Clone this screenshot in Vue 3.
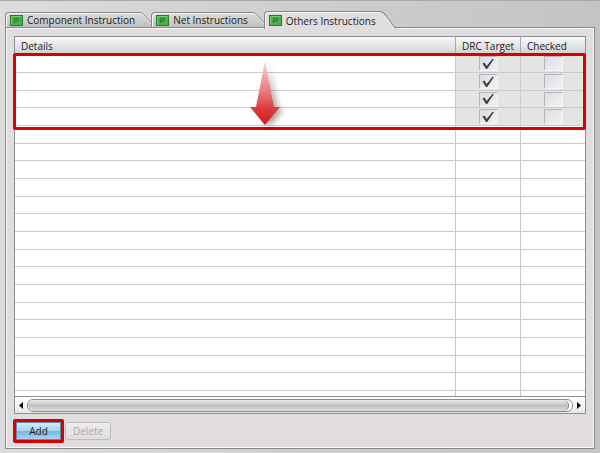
<template>
  <main class="window">
    <nav class="tabs" role="tablist">
      <button
        v-for="tab in tabs"
        :key="tab"
        type="button"
        role="tab"
        class="tab"
        :class="{ 'tab--active': tab === activeTab }"
        :aria-selected="tab === activeTab"
        @click="activeTab = tab"
      >
        <span class="tab-body">
          <svg class="tab-icon" width="13" height="11" viewBox="0 0 13 11">
            <rect x="0.5" y="0.5" width="12" height="10" fill="#4dae4b" stroke="#227e2b" />
            <path d="M1.5 9.5V1.5H11.5" fill="none" stroke="#72c96c" />
            <path d="M4.5 8V3.5H8.5V5.5H6.5V6.5H4.5" fill="none" stroke="#277b2a" />
          </svg>
          {{ tab }}
        </span>
        <svg class="tab-end" width="16" height="17" viewBox="0 0 16 17" preserveAspectRatio="none">
          <defs>
            <linearGradient id="tab-fill" x1="0" y1="0" x2="0" y2="1">
              <stop offset="0" stop-color="#dcdcdc" />
              <stop offset="1" stop-color="#c0c0c0" />
            </linearGradient>
          </defs>
          <path class="tab-end-fill" d="M0 0C3 0 4 2 6 5L15 17H0Z" fill="url(#tab-fill)" />
          <path d="M0 1.5C3 1.5 4 3 6 6L14 16" fill="none" stroke="#f8f8f8" />
          <path d="M0 0.5C3 0.5 4 2 6 4.5L15.5 16.5" fill="none" stroke="#858589" />
        </svg>
      </button>
    </nav>

    <section class="panel">
      <div class="grid">
        <table class="table">
          <colgroup>
            <col />
            <col class="col-target" />
            <col class="col-checked" />
          </colgroup>
          <thead>
            <tr>
              <th>Details</th>
              <th>DRC Target</th>
              <th>Checked</th>
            </tr>
          </thead>
          <tbody>
            <tr v-for="(row, i) in rows" :key="i" :class="{ filled: row }">
              <td></td>
              <td>
                <label v-if="row" class="check">
                  <input v-model="row.target" type="checkbox" aria-label="DRC Target" />
                  <svg v-if="row.target" width="12" height="12" viewBox="0 0 12 12">
                    <path d="M0.5 5.5L2.5 4.5L4.7 8L10.5 0.8L11.8 1.2L5.2 11H4Z" fill="#3f3f42" />
                  </svg>
                </label>
              </td>
              <td>
                <label v-if="row" class="check">
                  <input v-model="row.checked" type="checkbox" aria-label="Checked" />
                </label>
              </td>
            </tr>
          </tbody>
        </table>

        <div class="scrollbar">
          <button type="button" class="scroll-arrow" aria-label="Scroll left">
            <svg width="4" height="7" viewBox="0 0 4 7"><path d="M4 0V7L0 3.5Z" /></svg>
          </button>
          <div class="scroll-track"><div class="scroll-thumb"></div></div>
          <button type="button" class="scroll-arrow" aria-label="Scroll right">
            <svg width="4" height="7" viewBox="0 0 4 7"><path d="M0 0V7L4 3.5Z" /></svg>
          </button>
        </div>

        <div class="highlight">
          <svg class="arrow" width="44" height="76" viewBox="0 0 44 76">
            <defs>
              <linearGradient id="arrow-fill" x1="0" y1="0" x2="0" y2="1">
                <stop offset="0" stop-color="#fbd5d5" />
                <stop offset="0.45" stop-color="#ec8080" />
                <stop offset="0.75" stop-color="#db3a3c" />
                <stop offset="1" stop-color="#d3191c" />
              </linearGradient>
              <filter id="arrow-blur" x="-50%" y="-20%" width="200%" height="140%">
                <feGaussianBlur stdDeviation="3" />
              </filter>
              <linearGradient id="arrow-shade" x1="0" y1="0" x2="0" y2="1">
                <stop offset="0" stop-color="#000" stop-opacity="0.1" />
                <stop offset="1" stop-color="#000" stop-opacity="0.45" />
              </linearGradient>
            </defs>
            <path
              d="M22 8L31 54H37L22 71L8 54H13Z"
              transform="translate(4 2)"
              fill="url(#arrow-shade)"
              filter="url(#arrow-blur)"
            />
            <path d="M22 8L31 54H37L22 72L7 54H13Z" fill="url(#arrow-fill)" />
          </svg>
        </div>
      </div>

      <div class="actions">
        <span class="add-mark">
          <button type="button" class="btn btn--add">Add</button>
        </span>
        <button type="button" class="btn" disabled>Delete</button>
      </div>
    </section>
  </main>
</template>

<script setup>
import { ref } from 'vue'

const tabs = ['Component Instruction', 'Net Instructions', 'Others Instructions']
const activeTab = ref('Others Instructions')

const TOTAL_ROWS = 20
const FILLED_ROWS = 4

const rows = ref(
  Array.from({ length: TOTAL_ROWS }, (_, i) =>
    i < FILLED_ROWS ? { target: true, checked: false } : null
  )
)
</script>

<style>
body {
  margin: 0;
  background: #c9c8c8;
}
</style>

<style scoped>
.window {
  box-sizing: border-box;
  min-height: 100vh;
  padding: 10px 5px 5px;
  border-top: 1px solid #a9a9a9;
  background: linear-gradient(90deg, #dedddd, #cfcfcf 45%, #c4c4c4);
  font-family: 'Open Sans', 'Noto Sans', sans-serif;
  font-size: 10px;
  line-height: 14px;
  color: #1c1c22;
}

button {
  font: inherit;
  color: inherit;
}

.tabs {
  display: flex;
  align-items: flex-end;
  height: 16px;
}

.tab {
  display: flex;
  height: 15px;
  margin: 0 -4px 0 0;
  padding: 0;
  border: 0;
  background: none;
}

.tab-body {
  box-sizing: border-box;
  display: flex;
  align-items: center;
  gap: 4px;
  height: 100%;
  padding: 0 5px 0 4px;
  border: 1px solid #858589;
  border-width: 1px 0 0 1px;
  border-radius: 4px 0 0 0;
  background: linear-gradient(#dcdcdc, #c0c0c0);
  box-shadow: inset 1px 1px 0 #f8f8f8;
  white-space: nowrap;
}

.tab-icon {
  flex: none;
}

.tab-end {
  height: 100%;
  margin-left: -1px;
}

.tab--active {
  position: relative;
  height: 18px;
  margin-bottom: -2px;
}

.tab--active .tab-body {
  background: #e1dddd;
}

.tab--active .tab-end-fill {
  fill: #e1dddd;
}

.panel {
  padding: 8px 8px 5px;
  border: 1px solid #88888c;
  background: #e1dddc;
  box-shadow: inset 1px 1px 0 #fafafa, inset -1px -1px 0 #fafafa;
}

.grid {
  position: relative;
  border: 1px solid #8b8f98;
  background: #fff;
}

.table {
  width: 100%;
  border-collapse: separate;
  border-spacing: 0;
  table-layout: fixed;
}

.col-target {
  width: 65px;
}

.col-checked {
  width: 64px;
}

th {
  height: 18px;
  padding: 0 0 0 6px;
  border-right: 1px solid #a9abb0;
  background: linear-gradient(#fafafa, #cfcfcf);
  font-weight: 400;
  text-align: left;
  white-space: nowrap;
}

td {
  box-sizing: border-box;
  height: 18px;
  padding: 0;
  border: 1px solid #cbcbcb;
  border-width: 0 1px 1px 0;
  line-height: 0;
}

tr:nth-child(3n) td {
  height: 17px;
}

tbody tr:last-child td {
  height: 5px;
  border-bottom: 0;
}

th:last-child,
td:last-child {
  border-right: 0;
}

.filled td + td {
  background: #e4e4e2;
}

.check {
  display: grid;
  width: 19px;
  height: 15px;
  margin: 0 auto;
  place-items: center;
}

.check input,
.check svg {
  grid-area: 1 / 1;
}

.check input {
  box-sizing: border-box;
  width: 19px;
  height: 15px;
  margin: 0;
  border: 1px solid;
  border-color: #b5b5bb #f4f4f4 #f4f4f4 #b5b5bb;
  background: linear-gradient(135deg, #dddde2, #f2f2f4);
  appearance: none;
}

.check svg {
  pointer-events: none;
}

.scrollbar {
  display: flex;
  align-items: center;
  height: 16px;
  border-top: 1px solid #8b8f98;
  background: linear-gradient(#fff, #e8e8e8);
}

.scroll-arrow {
  display: grid;
  place-items: center;
  width: 12px;
  height: 15px;
  padding: 0;
  border: 0;
  background: none;
}

.scroll-track {
  flex: 1;
  box-sizing: border-box;
  height: 13px;
  padding-right: 3px;
  border: 1px solid #8d8d8d;
  border-radius: 6px;
  background: #fff;
}

.scroll-thumb {
  height: 11px;
  border-right: 1px solid #8d8d8d;
  border-radius: 5px;
  background: linear-gradient(#e8eae9, #bfc3c1 50%, #d9dbda);
}

.highlight {
  position: absolute;
  top: 16px;
  left: -2px;
  right: -1px;
  box-sizing: border-box;
  height: 77px;
  border: 3px solid #d90000;
  border-radius: 2px;
  pointer-events: none;
}

.arrow {
  position: absolute;
  top: -3px;
  left: 40%;
}

.actions {
  display: flex;
  align-items: center;
  gap: 1px;
  margin: 5px 0 0 -1px;
}

.add-mark {
  display: flex;
  border: 3px solid #d90000;
  border-radius: 2px;
}

.btn {
  box-sizing: border-box;
  width: 46px;
  height: 18px;
  padding: 0;
  border: 1px solid #bcbcbc;
  border-radius: 3px;
  background: linear-gradient(#ececec, #e0dfdf);
  line-height: 14px;
}

.btn:disabled {
  color: #aaa8a8;
}

.btn--add {
  width: 45px;
  border-color: #5f8fb4;
  border-radius: 0;
  background: linear-gradient(#d5eafa, #a9d2f2 48%, #78b4e2 52%, #a5d5f5);
}
</style>
